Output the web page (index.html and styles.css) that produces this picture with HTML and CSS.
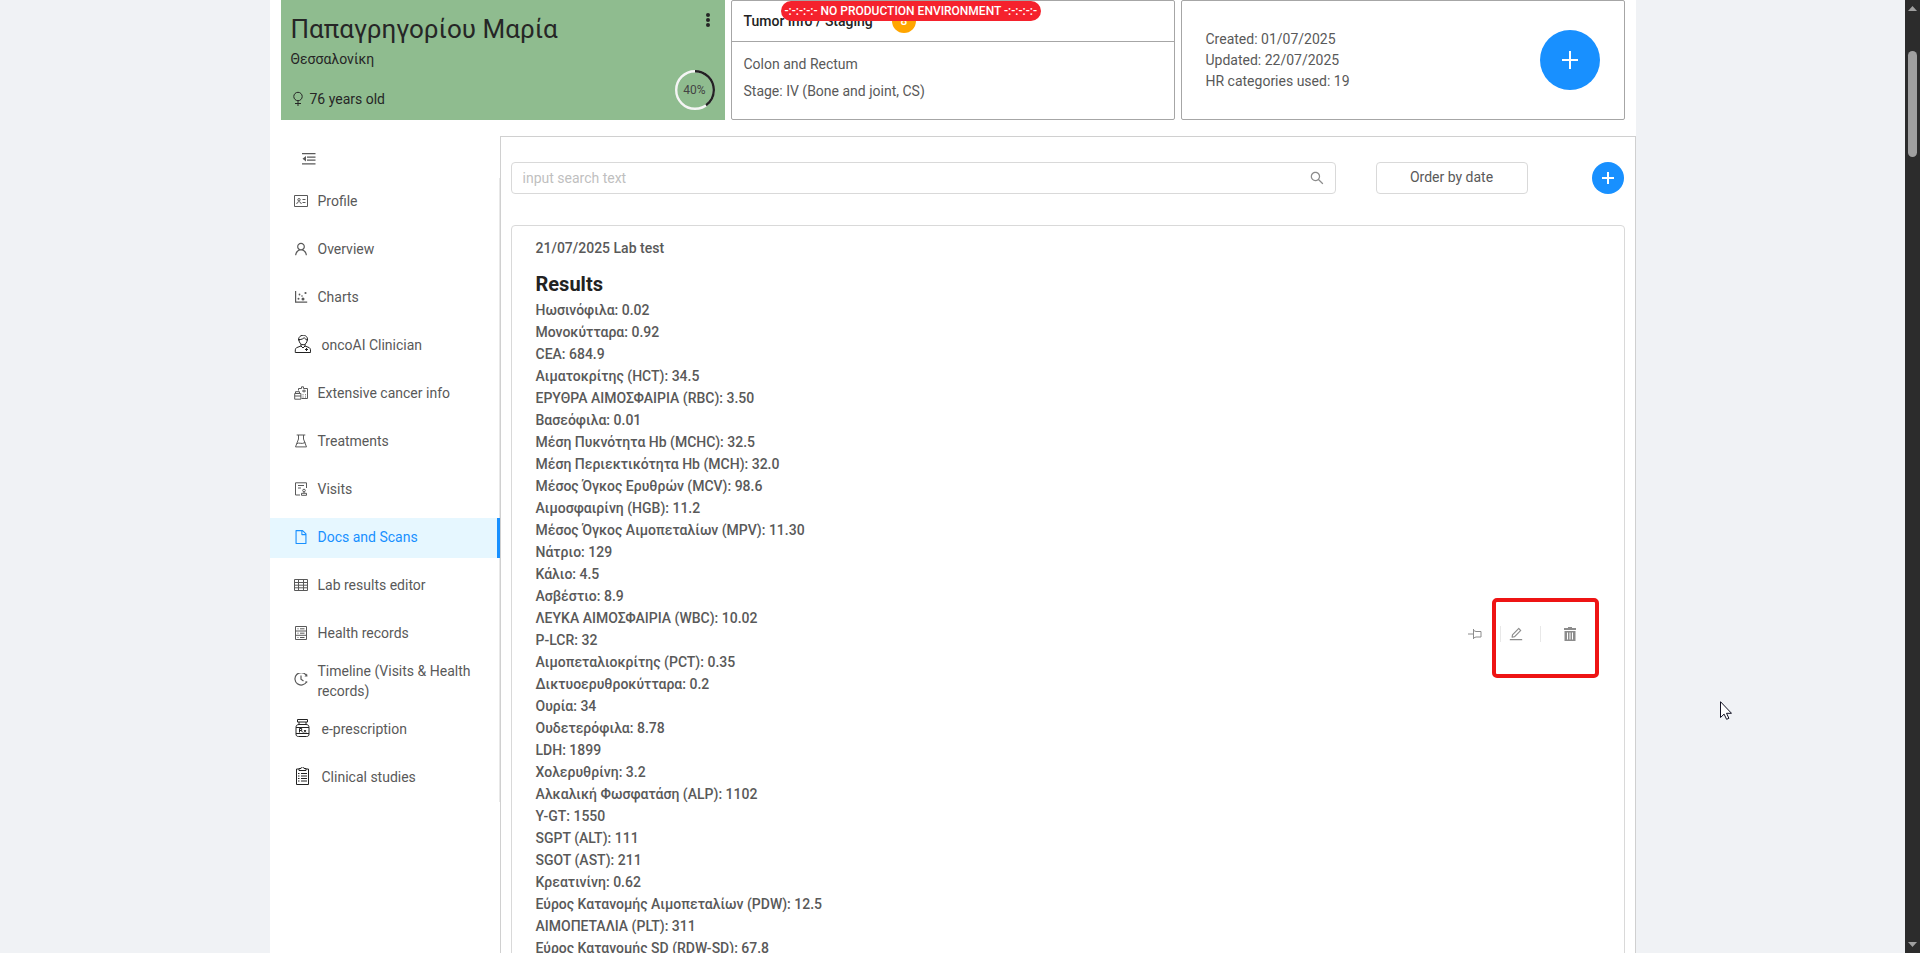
FILE: index.html
```html
<!DOCTYPE html>
<html lang="en">
<head>
<meta charset="utf-8">
<title>Docs and Scans</title>
<link rel="stylesheet" href="styles.css">
</head>
<body>
<div class="viewport">
  <div class="scroll-area">
    <div class="sheet">
      <header class="summary">
        <section class="card patient">
          <button class="more" type="button" aria-label="More options">
            <svg viewBox="0 0 6 16" width="6" height="16"><circle cx="3" cy="3" r="2"/><circle cx="3" cy="8" r="2"/><circle cx="3" cy="13" r="2"/></svg>
          </button>
          <h1 class="patient-name">Παπαγρηγορίου Μαρία</h1>
          <p class="patient-city">Θεσσαλονίκη</p>
          <p class="patient-age">
            <svg class="icon" viewBox="0 0 16 16" fill="none" stroke="currentColor"><circle cx="7" cy="5.500" r="4.200"/><path d="M7 9.700v5.300M4 12.500h6"/></svg>
            76 years old
          </p>
          <div class="progress">
            <svg viewBox="0 0 40 40" width="40" height="40" fill="none" stroke-width="2.4"><circle cx="20" cy="20" r="18.8" stroke="#f5f5f5"/><circle cx="20" cy="20" r="18.8" stroke="#222" pathLength="100" stroke-dasharray="40 100" transform="rotate(-90 20 20)"/></svg>
            <span class="progress-value">40%</span>
          </div>
        </section>

        <section class="card tumor">
          <h2 class="tumor-title">Tumor Info / Staging <span class="badge">8</span></h2>
          <div class="tumor-body">
            <p>Colon and Rectum</p>
            <p>Stage: IV (Bone and joint, CS)</p>
          </div>
          <div class="env-banner">-:-:-:-:- NO PRODUCTION ENVIRONMENT -:-:-:-:-</div>
        </section>

        <section class="card record">
          <div class="record-meta">
            <p>Created: 01/07/2025</p>
            <p>Updated: 22/07/2025</p>
            <p>HR categories used: 19</p>
          </div>
          <button class="round round-large" type="button" aria-label="Add record">
            <svg viewBox="0 0 18 18" width="18" height="18"><path d="M8 0h2v18H8zM1 8h16v2H1z"/></svg>
          </button>
        </section>
      </header>

      <div class="workspace">
        <nav class="sidebar" aria-label="Patient sections">
          <button class="fold" type="button" aria-label="Collapse menu">
            <svg class="icon" viewBox="-1 -1 16 16"><path d="M0 1h13.500v1.300H0zM5 4.500h8.500v1.200H5zM5 7.600h8.500v1.200H5zM0 11.200h13.500v1.300H0zM4 4v5.500L.5 6.700z"/></svg>
          </button>
          <ul class="menu">
            <li><a class="item" href="#profile">
              <svg class="icon" viewBox="-1 -1 16 16" fill="none" stroke="currentColor"><path d="M.5 1.500h13v11H.5z"/><circle cx="5" cy="5.700" r="1.200"/><path d="M2.800 10c0-3 4.400-3 4.400 0M8.500 5.500h3M8.500 8.500h3"/></svg>
              <span>Profile</span></a></li>
            <li><a class="item" href="#overview">
              <svg class="icon" viewBox="0 0 1024 1024"><path d="M858.5 763.6a374 374 0 0 0-80.6-119.5 375.63 375.63 0 0 0-119.5-80.6c-.4-.2-.8-.3-1.2-.5C719.5 518 760 444.700 760 362c0-137-111-248-248-248S264 225 264 362c0 82.700 40.500 156 102.800 201.100-.4.2-.8.3-1.200.5-44.800 18.900-85 46-119.500 80.600a375.630 375.630 0 0 0-80.600 119.500A371.700 371.700 0 0 0 136 901.800a8 8 0 0 0 8 8.200h60c4.400 0 7.900-3.500 8-7.800 2-77.200 33-149.500 87.800-204.300 56.700-56.700 132-87.900 212.200-87.900s155.500 31.200 212.200 87.900C779 752.700 810 825 812 902.200c.1 4.400 3.600 7.800 8 7.800h60a8 8 0 0 0 8-8.200c-1-47.800-10.900-94.300-29.500-138.200zM512 534c-45.900 0-89.100-17.900-121.600-50.400S340 407.900 340 362c0-45.900 17.900-89.100 50.400-121.600S466.100 190 512 190s89.100 17.900 121.600 50.400S684 316.100 684 362c0 45.900-17.900 89.100-50.400 121.600S557.900 534 512 534z"/></svg>
              <span>Overview</span></a></li>
            <li><a class="item" href="#charts">
              <svg class="icon" viewBox="-1 -1 16 16"><path d="M1 1h1.200v10.500h11v1.300H1z"/><circle cx="4.500" cy="8.800" r="1"/><circle cx="5.500" cy="4.500" r=".9"/><circle cx="8" cy="6" r=".8"/><circle cx="9" cy="9" r="1.500"/><circle cx="11.500" cy="3" r="1.100"/></svg>
              <span>Charts</span></a></li>
            <li><a class="item" href="#onco-ai">
              <svg class="icon-large" viewBox="0 1 20 20" fill="none" stroke="currentColor"><path d="M5.500 6.500c-.5-7 10-7 9 0M5.800 5.500c3 .5 5-1.500 5.500-1.800.5 1.200 1.700 1.800 3 1.800M6 5.500c0 7 8.200 7 8.200 0M8 10v2l-4.500 1.700c-1.500 1-1.200 3-1.200 4.800h15.200c0-1.800.3-3.800-1.200-4.800L12 12v-2M8 12l2 2 2-2"/><path d="M12 15.500h3M13.500 14v3"/></svg>
              <span>oncoAI Clinician</span></a></li>
            <li><a class="item" href="#cancer-info">
              <svg class="icon" viewBox="-1 -1 16 16" fill="none" stroke="currentColor"><path d="M4.500 4.500v-2h3V.8h2v1.700h4v10h-6M1.500 7.500V5.700h4v1.800M.7 7.500h6.200v5.700H.7zM.7 10h6.200M8 5h4M10 3.500v3"/><path d="M9 8.300v1M11.500 8.300v1M9 10.500v1M11.500 10.500v1"/></svg>
              <span>Extensive cancer info</span></a></li>
            <li><a class="item" href="#treatments">
              <svg class="icon" viewBox="-1 -1 16 16" fill="none" stroke="currentColor"><path d="M2.700 1h8.600M4.500 1v4L1.500 12.900h11L9.500 5V1M2.700 9.800c2.500-2 4 1 8.600-1.300"/></svg>
              <span>Treatments</span></a></li>
            <li><a class="item" href="#visits">
              <svg class="icon" viewBox="-1 -1 16 16" fill="none" stroke="currentColor"><path d="M6 13H1.500V.8h11V6M4 3.500h6M4 6h3"/><circle cx="10" cy="8.500" r="1.300"/><path d="M10 10v1M7.500 13.300v-2h5v2z"/></svg>
              <span>Visits</span></a></li>
            <li><a class="item selected" href="#docs" aria-current="page">
              <svg class="icon" viewBox="0 0 1024 1024"><path d="M854.600 288.600L639.400 73.400c-6-6-14.100-9.400-22.600-9.400H192c-17.700 0-32 14.300-32 32v832c0 17.700 14.300 32 32 32h640c17.700 0 32-14.300 32-32V311.300c0-8.500-3.400-16.700-9.400-22.700zM790.200 326H602V137.800L790.200 326zm1.800 562H232V136h302v216a42 42 0 0 0 42 42h216v494z"/></svg>
              <span>Docs and Scans</span></a></li>
            <li><a class="item" href="#lab-editor">
              <svg class="icon" viewBox="-1 -1 16 16" fill="none" stroke="currentColor"><path d="M.5 1.500h13v11H.5zM.5 4.500h13M.5 7.200h13M.5 9.800h13M4.500 1.500v11M9.500 1.500v11"/></svg>
              <span>Lab results editor</span></a></li>
            <li><a class="item" href="#health-records">
              <svg class="icon" viewBox="-1 -1 16 16" fill="none" stroke="currentColor"><path d="M1.500.5h11v13h-11zM1.500 5h11M1.500 9.300h11M3.500 2.800h1M3.500 7.200h1M3.500 11.500h1M6 2.800h4.500M6 7.200h4.500M6 11.500h4.500"/></svg>
              <span>Health records</span></a></li>
            <li><a class="item" href="#timeline">
              <svg class="icon" viewBox="-1 1 16 16" fill="none" stroke="currentColor" stroke-width="1.200"><path d="M12 3A6.200 6.200 0 1 0 12.500 10M7 3.500V7.200l2.500 1.700"/><path d="M10.500 4.500h3l-.5-3zM11 9.500l2.300-.2-.2 2z" fill="currentColor" stroke="none"/></svg>
              <span>Timeline (Visits &amp; Health records)</span></a></li>
            <li><a class="item" href="#prescription">
              <svg class="icon-large" viewBox="0 1 20 20" fill="none" stroke="currentColor"><path d="M4.500 1.500h10v2.500h-10zM6 4v2.500M13 4v2.500M6 6.500h7c2 0 3 1 3 3V16c0 1.700-.8 2.500-2.500 2.500h-8C3.800 18.500 3 17.700 3 16V9.500c0-2 1-3 3-3zM3 9.500h13M3 15.500h13"/><path d="M6.500 14.500v-4h2.200v2H6.500M8 12.500l2 2M11 12l2 2.500M13 12l-2 2.500"/></svg>
              <span>e-prescription</span></a></li>
            <li><a class="item" href="#studies">
              <svg class="icon-large" viewBox="0 1 20 20" fill="none" stroke="currentColor"><path d="M6 3H3.500v15.500h12V3H13M6 4.500v-2h2c0-2 3-2 3 0h2v2z"/><path d="M5 7.500h1.500M8 7.500h6M5 10h1.500M8 10h6M5 12.500h1.500M8 12.500h6M5 15h1.500M8 15h6"/></svg>
              <span>Clinical studies</span></a></li>
          </ul>
        </nav>

        <main class="content">
          <div class="toolbar">
            <label class="search">
              <input type="search" placeholder="input search text" aria-label="Search documents">
              <svg class="icon" viewBox="0 0 1024 1024"><path d="M909.600 854.500L649.900 594.800C690.200 542.700 712 479 712 412c0-80.200-31.300-155.400-87.900-212.100-56.600-56.700-132-87.900-212.100-87.900s-155.500 31.300-212.100 87.900C143.200 256.500 112 331.800 112 412c0 80.100 31.300 155.500 87.900 212.100C256.500 680.800 331.800 712 412 712c67 0 130.600-21.800 182.700-62l259.700 259.600a8.200 8.200 0 0 0 11.600 0l43.600-43.500a8.200 8.200 0 0 0 0-11.600zM570.400 570.400C528 612.700 471.800 636 412 636s-116-23.300-158.400-65.600C211.300 528 188 471.800 188 412s23.300-116.100 65.600-158.400C296 211.300 352.200 188 412 188s116.100 23.200 158.400 65.600S636 352.200 636 412s-23.300 116.100-65.600 158.400z"/></svg>
            </label>
            <button class="order" type="button">Order by date</button>
            <button class="round" type="button" aria-label="Add document">
              <svg viewBox="0 0 12 12" width="12" height="12"><path d="M5 0h2v12H5zM0 5h12v2H0z"/></svg>
            </button>
          </div>

          <article class="document">
            <div class="document-text">
              <p>21/07/2025 Lab test</p>
              <h3 class="results-title">Results</h3>
              <ul class="results">
                <li>Ηωσινόφιλα: 0.02</li>
                <li>Μονοκύτταρα: 0.92</li>
                <li>CEA: 684.9</li>
                <li>Αιματοκρίτης (HCT): 34.5</li>
                <li>ΕΡΥΘΡΑ ΑΙΜΟΣΦΑΙΡΙΑ (RBC): 3.50</li>
                <li>Βασεόφιλα: 0.01</li>
                <li>Μέση Πυκνότητα Hb (MCHC): 32.5</li>
                <li>Μέση Περιεκτικότητα Hb (MCH): 32.0</li>
                <li>Μέσος Όγκος Ερυθρών (MCV): 98.6</li>
                <li>Αιμοσφαιρίνη (HGB): 11.2</li>
                <li>Μέσος Όγκος Αιμοπεταλίων (MPV): 11.30</li>
                <li>Νάτριο: 129</li>
                <li>Κάλιο: 4.5</li>
                <li>Ασβέστιο: 8.9</li>
                <li>ΛΕΥΚΑ ΑΙΜΟΣΦΑΙΡΙΑ (WBC): 10.02</li>
                <li>P-LCR: 32</li>
                <li>Αιμοπεταλιοκρίτης (PCT): 0.35</li>
                <li>Δικτυοερυθροκύτταρα: 0.2</li>
                <li>Ουρία: 34</li>
                <li>Ουδετερόφιλα: 8.78</li>
                <li>LDH: 1899</li>
                <li>Χολερυθρίνη: 3.2</li>
                <li>Αλκαλική Φωσφατάση (ALP): 1102</li>
                <li>Υ-GT: 1550</li>
                <li>SGPT (ALT): 111</li>
                <li>SGOT (AST): 211</li>
                <li>Κρεατινίνη: 0.62</li>
                <li>Εύρος Κατανομής Αιμοπεταλίων (PDW): 12.5</li>
                <li>ΑΙΜΟΠΕΤΑΛΙΑ (PLT): 311</li>
                <li>Εύρος Κατανομής SD (RDW-SD): 67.8</li>
              </ul>
            </div>
            <div class="actions">
              <button type="button" aria-label="Pin">
                <svg class="icon" viewBox="0 -1 16 16" fill="none" stroke="currentColor"><path d="M0 7h5.500M5.500 2v10M5.500 3.500l2.500 1h5v5.500H8l-2.500 1"/></svg>
              </button>
              <button type="button" aria-label="Edit">
                <svg class="icon" viewBox="0 0 1024 1024"><path d="M257.700 752c2 0 4-.2 6-.5L431.900 722c2-.4 3.900-1.300 5.300-2.800l423.900-423.900a9.960 9.960 0 0 0 0-14.100L694.900 114.900c-1.900-1.900-4.400-2.900-7.100-2.900s-5.200 1-7.100 2.900L256.800 538.800c-1.500 1.500-2.400 3.300-2.800 5.300l-29.500 168.200a33.500 33.500 0 0 0 9.400 29.800c6.600 6.400 14.900 9.900 23.800 9.900zm67.400-174.400L687.800 215l73.300 73.300-362.700 362.600-88.900 15.700 15.600-89zM880 836H144c-17.700 0-32 14.300-32 32v36c0 4.400 3.600 8 8 8h784c4.400 0 8-3.600 8-8v-36c0-17.700-14.300-32-32-32z"/></svg>
              </button>
              <button class="delete" type="button" aria-label="Delete">
                <svg class="icon" viewBox="-1 -1 16 16"><path fill-rule="evenodd" d="M5 0h4v1h4v2H1V1h4zM1.500 4h11v10h-11zM4 5.500v7h1v-7zM6.500 5.500v7h1v-7zM9 5.500v7h1v-7z"/></svg>
              </button>
              <span class="highlight"></span>
            </div>
          </article>
        </main>
      </div>
    </div>
  </div>
  <div class="scrollbar" aria-hidden="true">
    <svg viewBox="0 0 9 5" width="9" height="5"><path d="M4.500 0L9 5H0z"/></svg>
    <span class="thumb"></span>
    <svg viewBox="0 0 9 5" width="9" height="5"><path d="M0 0h9L4.500 5z"/></svg>
  </div>
  <svg class="cursor" viewBox="0 0 12 19" width="12" height="19"><path d="M.5.7v15.800l3.600-3.400 2.500 5.200 2.300-1-2.400-5h5z" fill="#fff" stroke="#112"/></svg>
</div>
</body>
</html>
```
FILE: styles.css
```css
* { box-sizing: border-box; }
body, h1, h2, h3, p, ul { margin: 0; padding: 0; }
ul { list-style: none; }
body {
  font: 400 14px/22px Roboto, "Liberation Sans", sans-serif;
  color: #595959;
  background: #f0f2f5;
}
button {
  font: inherit;
  color: inherit;
  border: 0;
  padding: 0;
  background: none;
  cursor: pointer;
}
svg { display: block; fill: currentColor; }
svg[fill="none"] { fill: none; }
.icon { width: 16px; height: 16px; flex: none; }
.icon-large { width: 20px; height: 20px; flex: none; color: #222; }

.viewport { position: relative; display: flex; height: 100vh; overflow: hidden; }
.scroll-area { flex: 1; overflow: hidden; }
.sheet { max-width: 1366px; min-height: 100%; margin: 0 auto; background: #fff; }

/* Summary cards */
.summary {
  display: grid;
  grid-template-columns: repeat(3, 1fr);
  gap: 6px;
  padding: 0 11px 16px;
}
.card { position: relative; min-height: 120px; border: 1px solid #a6a6a6; border-radius: 2px; }
.patient { padding: 10px; color: #262626; background: #8fbc8f; border: 0; border-radius: 0; }
.patient-name { font-size: 26px; font-weight: 400; line-height: 38px; }
.patient-city { line-height: 22px; }
.patient-age { display: flex; align-items: center; gap: 3px; margin-top: 18px; }
.more { position: absolute; top: 12px; right: 14px; }
.progress { position: absolute; right: 10px; bottom: 10px; }
.progress-value { position: absolute; inset: 0; font-size: 12px; line-height: 40px; text-align: center; color: #444; }

.tumor-title {
  display: flex;
  align-items: center;
  gap: 19px;
  height: 41px;
  padding: 0 12px;
  font-size: 14px;
  font-weight: 500;
  color: #222;
  border-bottom: 1px solid #a6a6a6;
}
.badge {
  width: 24px;
  height: 24px;
  border-radius: 50%;
  color: #fff;
  background: orange;
  font-size: 12px;
  line-height: 24px;
  text-align: center;
}
.tumor-body { display: grid; gap: 5px; padding: 11px 12px; }
.env-banner {
  position: absolute;
  top: 0;
  left: 49px;
  padding: 0 4px;
  border-radius: 10px;
  color: #fff;
  background: #f5222d;
  font-size: 12px;
  font-weight: 500;
  line-height: 20px;
  white-space: nowrap;
}

.record { display: flex; align-items: center; justify-content: space-between; padding: 0 24px; }
.record-meta { line-height: 21px; }
.round {
  display: grid;
  place-items: center;
  width: 32px;
  height: 32px;
  border-radius: 50%;
  color: #fff;
  background: #1890ff;
}
.round-large { width: 60px; height: 60px; }

/* Side menu */
.workspace { display: grid; grid-template-columns: 230px 1fr; }
.fold { display: block; padding: 15px 31px 11px; }
.menu { border-right: 1px solid #e8e8e8; padding: 4px 0; display: grid; gap: 8px; }
.item {
  display: flex;
  align-items: center;
  gap: 9px;
  height: 40px;
  padding: 0 24px 2px 23px;
  color: inherit;
  line-height: 20px;
  text-decoration: none;
}
.selected { color: #1890ff; background: #e6f7ff; border-right: 3px solid #1890ff; margin-right: -1px; }

/* Documents */
.content { border: 1px solid #d0d0d0; padding: 25px 10px 24px; }
.toolbar { display: flex; align-items: center; padding-right: 1px; }
.search {
  display: flex;
  align-items: center;
  flex: 1;
  height: 32px;
  padding: 0 10px 0 11px;
  border: 1px solid #d9d9d9;
  border-radius: 4px;
  color: #8c8c8c;
}
.search input {
  flex: 1;
  min-width: 0;
  padding: 0;
  border: 0;
  outline: 0;
  background: none;
  font: inherit;
}
.search input::placeholder { color: #bfbfbf; }
.order { width: 152px; height: 32px; margin: 0 64px 0 40px; padding-bottom: 2px; border: 1px solid #d9d9d9; border-radius: 4px; }
.document {
  display: flex;
  align-items: center;
  justify-content: space-between;
  margin-top: 31px;
  padding: 0 24px;
  border: 1px solid #d9d9d9;
  border-radius: 4px;
  font-weight: 500;
}
.document-text { padding: 11px 0 82px; }
.results-title { margin: 11px 0 1px; font-size: 20px; line-height: 28px; font-weight: 700; color: #222; }
.actions { position: relative; display: flex; align-items: center; color: #8c8c8c; }
.actions button { height: 16px; padding: 0 16px 0 7px; border-right: 1px solid #e8e8e8; }
.actions .delete { padding: 0 22px 0 21px; border: 0; }
.highlight {
  position: absolute;
  top: -28px;
  right: 1px;
  width: 107px;
  height: 80px;
  border: 4px solid #ee1414;
  border-radius: 5px;
  pointer-events: none;
}

.scrollbar {
  display: flex;
  flex-direction: column;
  align-items: center;
  width: 15px;
  padding: 6px 0;
  color: #9f9f9f;
  background: #2c2c2c;
}
.thumb { width: 9px; height: 106px; margin: 40px 0 auto; border-radius: 5px; background: #9f9f9f; }
.cursor { position: absolute; left: 1720px; top: 701px; }
```
